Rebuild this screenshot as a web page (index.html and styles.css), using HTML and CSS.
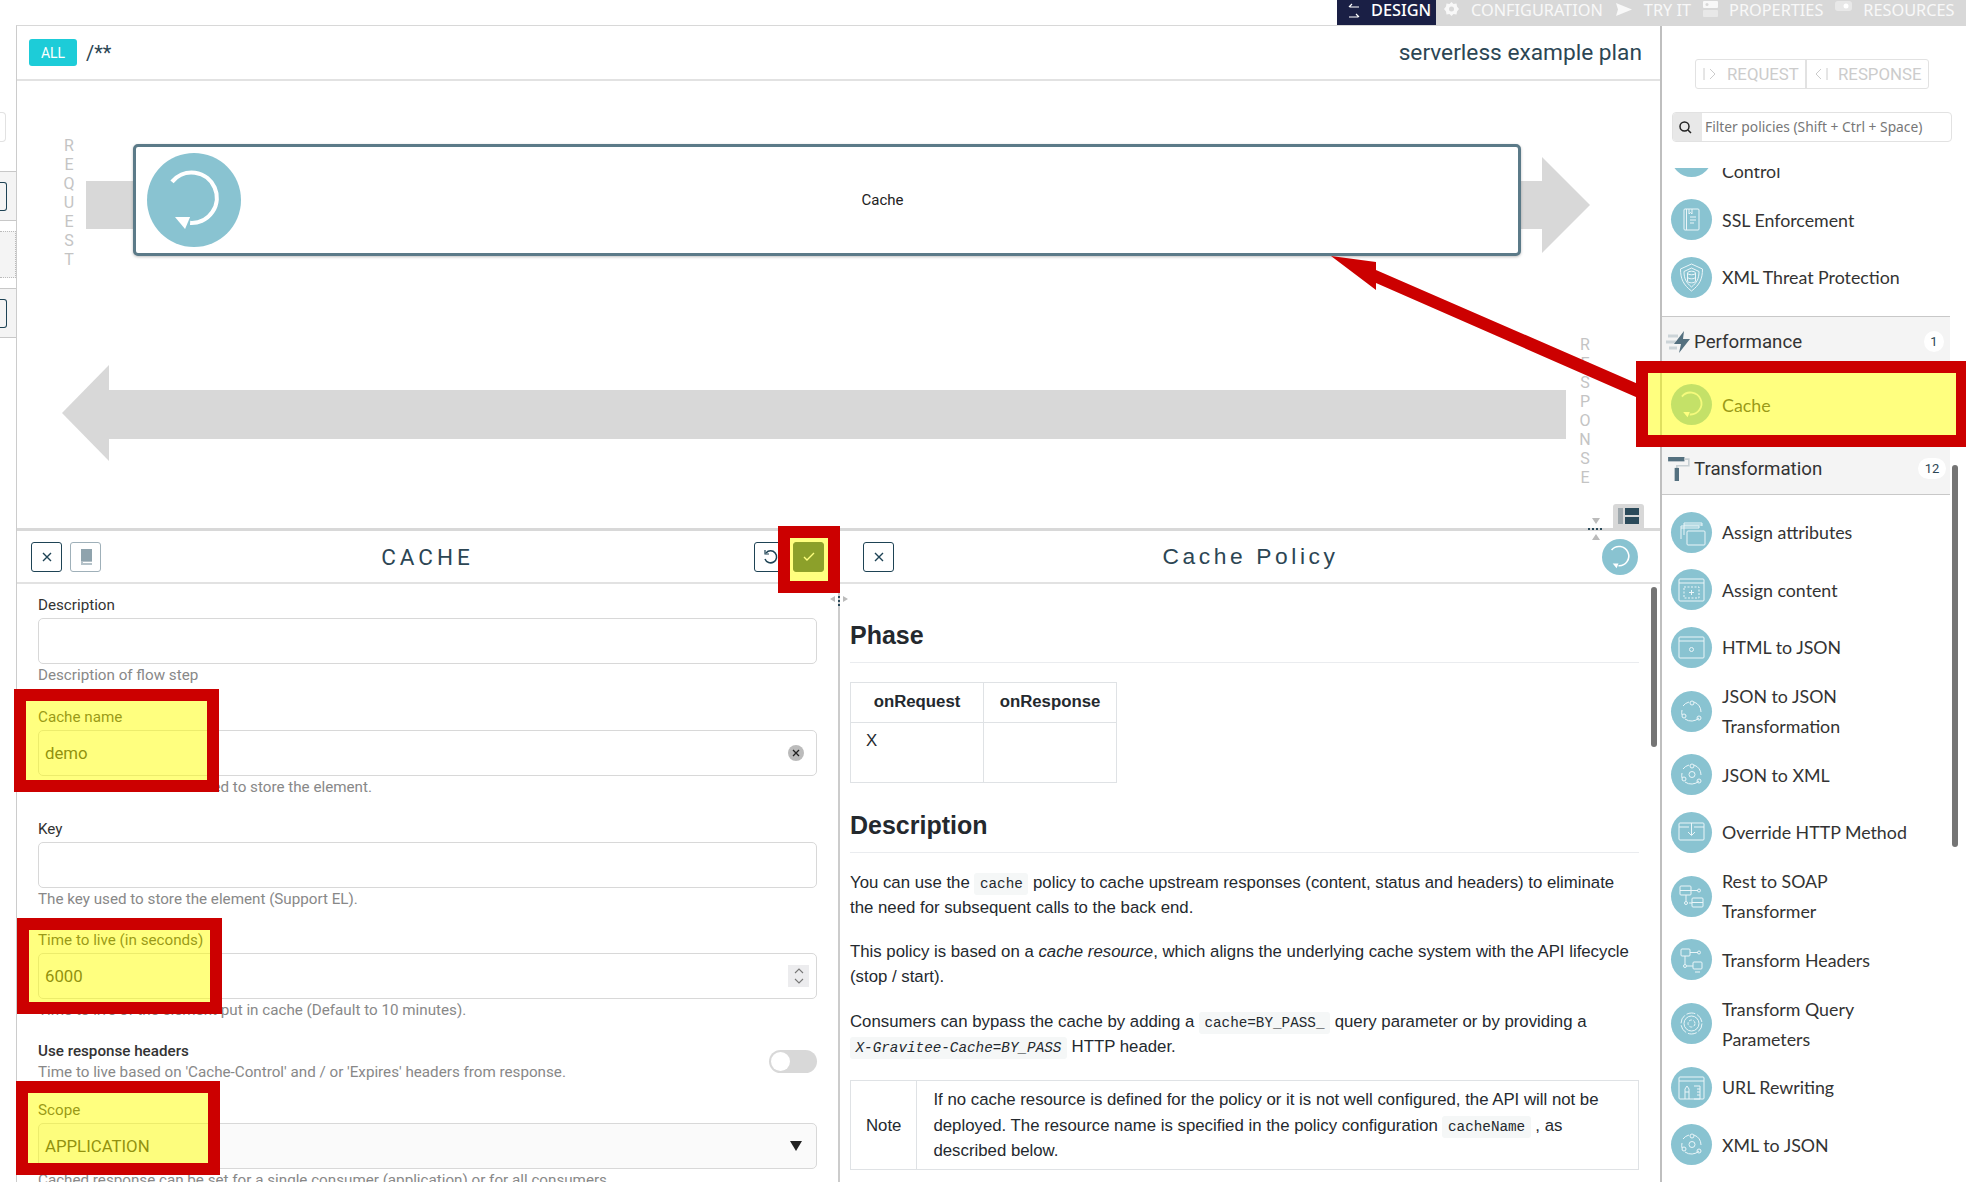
FILE: index.html
```html
<!DOCTYPE html>
<html lang="en">
<head>
  <meta charset="UTF-8">
  <title>Design - serverless example plan</title>
  <link rel="stylesheet" href="styles.css">
</head>
<body>
  <svg class="defs" width="0" height="0">
    <symbol id="i-cache" viewBox="0 0 41 41"><path d="M10.9 12.6A11 11 0 1 1 18.8 30.5" fill="none" stroke-width="1.8"/><path d="M12.2 27.9L16.6 33.2 18.8 27.9Z" fill="#fff" stroke="none"/></symbol>
    <symbol id="i-ssl" viewBox="0 0 41 41"><rect x="13" y="10" width="15" height="21" rx="1"/><path d="M15.5 10v21M18 10v5l1.5-1.5L21 15v-5M19 18h6M19 21h6M19 24h4"/></symbol>
    <symbol id="i-shield" viewBox="0 0 41 41"><path d="M20.5 7l11 5c0 10-3 16-11 22-8-6-11-12-11-22z"/><path d="M20.5 11l7.500 3.500c0 7-2 11-7.500 15.500-5.500-4.500-7.500-8.500-7.500-15.500z"/><ellipse cx="20.500" cy="16" rx="4" ry="1.800"/><path d="M16.500 16v8c0 2.400 8 2.400 8 0v-8M16.500 20c0 2.400 8 2.400 8 0"/></symbol>
    <symbol id="i-attr" viewBox="0 0 41 41"><path d="M13 23V11h18v3M10 27V14h18v2"/><rect x="16" y="19" width="18" height="14" rx="1"/><path d="M10 16h18M13 13h18"/></symbol>
    <symbol id="i-content" viewBox="0 0 41 41"><rect x="8" y="10" width="25" height="22" rx="1"/><path d="M8 14h25"/><rect x="13" y="18" width="15" height="11" stroke-dasharray="2 1.500"/><path d="M20.500 21v5M18 23.500h5"/></symbol>
    <symbol id="i-html" viewBox="0 0 41 41"><rect x="8" y="10" width="25" height="21" rx="1"/><path d="M8 14h25"/><circle cx="20.500" cy="22.500" r="2"/></symbol>
    <symbol id="i-ring" viewBox="0 0 41 41"><path d="M12 15a11 11 0 0 1 6-4M23 11a11 11 0 0 1 7 10M28 27a11 11 0 0 1-14 1M11 24a11 11 0 0 1 0-5"/><circle cx="21" cy="12" r="2"/><circle cx="13" cy="25" r="2"/><circle cx="28" cy="27" r="2"/></symbol>
    <symbol id="i-ring2" viewBox="0 0 41 41"><path d="M12 15a11 11 0 0 1 6-4M23 11a11 11 0 0 1 7 10M28 27a11 11 0 0 1-14 1M11 24a11 11 0 0 1 0-5"/><circle cx="21" cy="12" r="2"/><circle cx="13" cy="25" r="2"/><circle cx="28" cy="27" r="2"/><circle cx="21" cy="20.500" r="3"/></symbol>
    <symbol id="i-override" viewBox="0 0 41 41"><rect x="8" y="11" width="25" height="17" rx="1"/><path d="M8 15h10M23 15h10M20.500 11v12M17 20l3.500 3.500L24 20"/></symbol>
    <symbol id="i-soap" viewBox="0 0 41 41"><rect x="9" y="10" width="11" height="9" rx="1"/><rect x="21" y="22" width="11" height="9" rx="1"/><path d="M9 14.500h11M21 26.500h11M20 14.500h7M15 19v6M18 27h3"/><circle cx="28" cy="14.500" r="1.500"/><circle cx="15" cy="27" r="1.500"/></symbol>
    <symbol id="i-headers" viewBox="0 0 41 41"><rect x="10" y="10" width="9" height="7" rx="1"/><rect x="22" y="23" width="9" height="7" rx="1"/><path d="M19 13.500h8M14 17v8M16 27h6M24 33h5"/><circle cx="28" cy="13.500" r="1.500"/><circle cx="14" cy="27" r="1.500"/></symbol>
    <symbol id="i-query" viewBox="0 0 41 41"><circle cx="20.500" cy="20.500" r="10.500" stroke-dasharray="9 2"/><circle cx="20.500" cy="20.500" r="7.500"/><circle cx="20.500" cy="20.500" r="3.500" stroke-dasharray="3 1.500"/></symbol>
    <symbol id="i-url" viewBox="0 0 41 41"><rect x="8" y="10" width="25" height="22" rx="1"/><path d="M8 14h25M14 32V22l2-3 2 3v10M14 25h4M23 19h6v13h-6M26 22h3M26 25h3M26 28h3"/></symbol>
  </svg>

  <nav class="topbar">
    <a class="tab tab-active"><svg width="14" height="22" viewBox="0 0 14 22" fill="none" stroke="#fff" stroke-width="1.2"><path d="M12 6H3M5 3L2 6M2 16h9M9 13l3 3"/></svg>DESIGN</a>
    <a class="tab"><svg width="17" height="17" viewBox="0 0 17 17"><path d="M8.500 1l2 2 3-.5.500 3 2 2.500-2 2.500-.500 3-3-.5-2 2-2-2-3 .5-.5-3L1 8l2-2.500.5-3 3 .5z" fill="#f8f8f8"/><circle cx="8.500" cy="8" r="2.500" fill="#d8d8d8"/></svg>CONFIGURATION</a>
    <a class="tab"><svg width="18" height="17" viewBox="0 0 18 17"><path d="M1 2l16 6.500L1 15l2-6.500z" fill="#f8f8f8"/></svg>TRY IT</a>
    <a class="tab"><svg width="15" height="16" viewBox="0 0 15 16"><rect width="15" height="7" rx="1" fill="#f8f8f8"/><rect y="9" width="15" height="7" rx="1" fill="#e8e8e8"/><circle cx="4" cy="3.500" r="1.500" fill="#d8d8d8"/></svg>PROPERTIES</a>
    <a class="tab"><svg width="17" height="10" viewBox="0 0 17 10"><rect width="17" height="10" rx="3" fill="#e8e8e8"/><circle cx="11" cy="5" r="2.500" fill="#fff"/></svg>RESOURCES</a>
  </nav>

  <div class="layout">
    <div class="strip">
      <div class="strip-input"></div>
      <div class="strip-row strip-row-first"><span class="strip-box"></span></div>
      <div class="strip-dotted"></div>
      <div class="strip-row"><span class="strip-box"></span></div>
    </div>

    <main class="main">
      <header class="plan-head">
        <span class="badge">ALL</span>
        <span class="path">/**</span>
        <span class="plan-name">serverless example plan</span>
      </header>

      <section class="flow">
        <div class="flow-request">
          <div class="vertical">R E Q U E S T</div>
          <div class="tail"></div>
          <div class="step">
            <svg class="step-icon" width="94" height="94"><use href="#i-cache"/></svg>
            <span class="step-name">Cache</span>
          </div>
          <svg class="head-right" width="69" height="96" viewBox="0 0 69 96"><path d="M0 24H21V0L69 48 21 96V72H0Z" fill="#d8d8d8"/></svg>
        </div>
        <div class="flow-response">
          <svg class="head-left" width="47" height="96" viewBox="0 0 47 96"><path d="M47 0L0 48 47 96Z" fill="#d8d8d8"/></svg>
          <div class="body"></div>
          <div class="vertical vertical-res">R E S P O N S E</div>
        </div>
        <button class="layout-btn"><svg width="21" height="16" viewBox="0 0 21 16"><rect width="5" height="16" fill="#9fa8ad"/><rect x="7" width="14" height="7" fill="#2b4a5a"/><rect x="7" y="9" width="14" height="7" fill="#2b4a5a"/></svg></button>
        <svg class="drag-h" width="18" height="22" viewBox="0 0 18 22"><path d="M5 0h8l-4 6zM5 22h8l-4-6z" fill="#bbb"/><path d="M1 11h16" stroke="#2b4a5a" stroke-width="2" stroke-dasharray="2 2"/></svg>
      </section>

      <section class="panels">
        <div class="panel panel-form">
          <div class="panel-head">
            <div class="btns">
              <button class="btn"><svg width="12" height="12" viewBox="0 0 12 12" stroke="#1e4355" stroke-width="1.400"><path d="M2 2l8 8M10 2l-8 8"/></svg></button>
              <button class="btn btn-grey"><svg width="14" height="18" viewBox="0 0 14 18"><path d="M2 1h11v12H2z" fill="#8fa3ad"/><path d="M2 13h11v1H4v1h9v2H2z" fill="#b5c2c9"/></svg></button>
            </div>
            <h3 class="panel-title">CACHE</h3>
            <div class="btns btns-right">
              <button class="btn"><svg width="16" height="16" viewBox="0 0 16 16" fill="none" stroke="#1e4355" stroke-width="1.500"><path d="M4 4a6 6 0 1 1-1 6"/><path d="M3 1v4h4" stroke-width="1.200"/></svg></button>
              <button class="btn btn-dark"><svg width="12" height="10" viewBox="0 0 12 10" fill="none" stroke="#fff" stroke-width="1.400"><path d="M1 5l3 3 7-7"/></svg></button>
            </div>
          </div>
          <form class="form">
            <div class="field">
              <label>Description</label>
              <div class="input"></div>
              <div class="hint">Description of flow step</div>
            </div>
            <div class="field">
              <label>Cache name</label>
              <div class="input">demo<span class="clear"><svg width="8" height="8" viewBox="0 0 8 8" stroke="#222" stroke-width="1.300"><path d="M1 1l6 6M7 1L1 7"/></svg></span></div>
              <div class="hint">The name of the cache used to store the element.</div>
            </div>
            <div class="field">
              <label>Key</label>
              <div class="input"></div>
              <div class="hint">The key used to store the element (Support EL).</div>
            </div>
            <div class="field">
              <label>Time to live (in seconds)</label>
              <div class="input">6000<span class="spin"><svg width="10" height="18" viewBox="0 0 10 18" fill="none" stroke="#777" stroke-width="1.100"><path d="M1 6l4-4 4 4M1 12l4 4 4-4"/></svg></span></div>
              <div class="hint">Time to live of the element put in cache (Default to 10 minutes).</div>
            </div>
            <div class="field-toggle">
              <div>
                <div class="toggle-label">Use response headers</div>
                <div class="hint">Time to live based on 'Cache-Control' and / or 'Expires' headers from response.</div>
              </div>
              <span class="toggle"><span class="knob"></span></span>
            </div>
            <div class="field field-scope">
              <label>Scope</label>
              <div class="input input-select">APPLICATION<span class="caret"></span></div>
              <div class="hint">Cached response can be set for a single consumer (application) or for all consumers.</div>
            </div>
          </form>
          <svg class="drag-v" width="18" height="14" viewBox="0 0 18 14"><path d="M0 4l5-3v6zM18 4l-5-3v6z" fill="#bbb"/><path d="M9 1v12" stroke="#2b4a5a" stroke-width="2" stroke-dasharray="2 2"/></svg>
        </div>

        <div class="panel panel-doc">
          <div class="panel-head">
            <div class="btns">
              <button class="btn"><svg width="12" height="12" viewBox="0 0 12 12" stroke="#1e4355" stroke-width="1.400"><path d="M2 2l8 8M10 2l-8 8"/></svg></button>
            </div>
            <h3 class="panel-title panel-title-doc">Cache Policy</h3>
            <div class="btns btns-right">
              <svg class="doc-icon" width="36" height="36"><use href="#i-cache"/></svg>
            </div>
          </div>
          <article class="doc">
            <h2>Phase</h2>
            <table class="phase">
              <tr><th>onRequest</th><th>onResponse</th></tr>
              <tr><td>X</td><td></td></tr>
            </table>
            <h2 class="doc-desc">Description</h2>
            <p>You can use the <code>cache</code> policy to cache upstream responses (content, status and headers) to eliminate the need for subsequent calls to the back end.</p>
            <p>This policy is based on a <em>cache resource</em>, which aligns the underlying cache system with the API lifecycle (stop / start).</p>
            <p>Consumers can bypass the cache by adding a <code>cache=BY_PASS_</code> query parameter or by providing a <em><code>X-Gravitee-Cache=BY_PASS</code></em> HTTP header.</p>
            <table class="note">
              <tr><td class="note-label">Note</td><td class="note-text">If no cache resource is defined for the policy or it is not well configured, the API will not be deployed. The resource name is specified in the policy configuration <code>cacheName</code> , as described below.</td></tr>
            </table>
          </article>
          <div class="doc-scroll"></div>
        </div>
      </section>
    </main>

    <aside class="sidebar">
      <div class="modes">
        <span class="mode mode-req"><svg width="16" height="16" viewBox="0 0 16 16" fill="none" stroke="#ccc"><path d="M2 2v12M8 3l5 5-5 5"/></svg>REQUEST</span>
        <span class="mode mode-res"><svg width="16" height="16" viewBox="0 0 16 16" fill="none" stroke="#ccc"><path d="M14 2v12M8 3L3 8l5 5"/></svg>RESPONSE</span>
      </div>
      <div class="filter">
        <span class="filter-icon"><svg width="14" height="14" viewBox="0 0 14 14" fill="none" stroke="#222" stroke-width="1.500"><circle cx="6.500" cy="6.500" r="4.500"/><path d="M10 10l3 3"/></svg></span>
        <span class="filter-text">Filter policies (Shift + Ctrl + Space)</span>
      </div>
      <div class="policies">
        <div class="policies-inner">
          <div class="policy policy-clip"><svg class="policy-icon" width="41" height="41"></svg><span>Role-based Access<br>Control</span></div>
          <div class="policy"><svg class="policy-icon" width="41" height="41"><use href="#i-ssl"/></svg><span>SSL Enforcement</span></div>
          <div class="policy"><svg class="policy-icon" width="41" height="41"><use href="#i-shield"/></svg><span>XML Threat Protection</span></div>
          <div class="group">
            <svg width="26" height="24" viewBox="0 0 26 24"><path d="M2 6h10M0 12h10M3 18h8" stroke="#ccd4d8" stroke-width="3"/><path d="M18 1L8 14h7l-2 9 11-14h-7z" fill="#54707f"/></svg>
            <span class="group-name">Performance</span><span class="count">1</span>
          </div>
          <div class="policies-group">
            <div class="policy"><svg class="policy-icon" width="41" height="41"><use href="#i-cache"/></svg><span>Cache</span></div>
          </div>
          <div class="group group-tall">
            <svg width="26" height="24" viewBox="0 0 20 22"><path d="M0 0h15v4H0z" fill="#54707f"/><path d="M15 2h4v6H8v3" fill="none" stroke="#c8d0d4" stroke-width="1.500"/><path d="M6 10h4v12H6z" fill="#54707f"/></svg>
            <span class="group-name">Transformation</span><span class="count count-wide">12</span>
          </div>
          <div class="policies-group">
            <div class="policy"><svg class="policy-icon" width="41" height="41"><use href="#i-attr"/></svg><span>Assign attributes</span></div>
            <div class="policy"><svg class="policy-icon" width="41" height="41"><use href="#i-content"/></svg><span>Assign content</span></div>
            <div class="policy"><svg class="policy-icon" width="41" height="41"><use href="#i-html"/></svg><span>HTML to JSON</span></div>
            <div class="policy"><svg class="policy-icon" width="41" height="41"><use href="#i-ring"/></svg><span>JSON to JSON<br>Transformation</span></div>
            <div class="policy"><svg class="policy-icon" width="41" height="41"><use href="#i-ring2"/></svg><span>JSON to XML</span></div>
            <div class="policy"><svg class="policy-icon" width="41" height="41"><use href="#i-override"/></svg><span>Override HTTP Method</span></div>
            <div class="policy"><svg class="policy-icon" width="41" height="41"><use href="#i-soap"/></svg><span>Rest to SOAP<br>Transformer</span></div>
            <div class="policy"><svg class="policy-icon" width="41" height="41"><use href="#i-headers"/></svg><span>Transform Headers</span></div>
            <div class="policy"><svg class="policy-icon" width="41" height="41"><use href="#i-query"/></svg><span>Transform Query<br>Parameters</span></div>
            <div class="policy"><svg class="policy-icon" width="41" height="41"><use href="#i-url"/></svg><span>URL Rewriting</span></div>
            <div class="policy"><svg class="policy-icon" width="41" height="41"><use href="#i-ring2"/></svg><span>XML to JSON</span></div>
          </div>
        </div>
      </div>
      <div class="side-scroll"></div>
    </aside>
  </div>

  <!-- annotations drawn over the screenshot -->
  <svg class="red-arrow" width="330" height="170" viewBox="1325 250 330 170"><path d="M1331 256L1376 262V270L1645 387V401L1376 283V290Z" fill="#cc0000"/></svg>
  <div class="mark mark-check"></div>
  <div class="mark mark-name"></div>
  <div class="mark mark-ttl"></div>
  <div class="mark mark-scope"></div>
  <div class="mark mark-policy"></div>
</body>
</html>
```

FILE: styles.css
```css
* {
  box-sizing: border-box;
}
html, body {
  margin: 0;
  height: 1182px;
  overflow: hidden;
}
body {
  position: relative;
  width: 1966px;
  font-family: "Roboto", "Liberation Sans", sans-serif;
  color: #333;
  background: #fff;
}
.defs {
  position: absolute;
}

/* top tabs */
.topbar {
  display: flex;
  width: 629px;
  height: 26px;
  margin-left: 1337px;
  background: #d8d8d8;
  font-family: "Noto Sans", sans-serif;
  font-size: 16.300px;
  line-height: 20px;
  color: #f8f8f8;
  overflow: hidden;
}
.tab {
  display: flex;
  align-items: flex-start;
  gap: 11px;
  height: 25px;
  padding: 0 5px 0 7px;
}
.tab svg {
  margin-top: 1px;
  flex: none;
}
.tab-active {
  width: 99px;
  padding: 0 0 0 10px;
  gap: 10px;
  background: #1a1f45;
  color: #fff;
  font-weight: 500;
}

.layout {
  display: flex;
  height: 1156px;
}

/* leftover of the collapsed menu */
.strip {
  width: 16px;
  flex: none;
  overflow: hidden;
}
.strip-input {
  width: 6px;
  height: 30px;
  margin: 86px 0 0;
  border: 1px solid #e2e2e2;
  border-left: 0;
  border-radius: 0 4px 4px 0;
}
.strip-row {
  height: 50px;
  padding-top: 10px;
  background: #f4f4f4;
  border-top: 1px solid #c8c8c8;
  border-bottom: 1px solid #c8c8c8;
}
.strip-row-first {
  margin-top: 29px;
}
.strip-box {
  display: block;
  width: 7px;
  height: 29px;
  border: 1px solid #1e4355;
  border-left: 0;
  border-radius: 0 3px 3px 0;
}
.strip-dotted {
  height: 47px;
  margin: 10px 0 10px;
  background: #f4f4f4;
  border-top: 1px dotted #bbb;
  border-bottom: 1px dotted #bbb;
  border-right: 1px dotted #bbb;
}

/* main column */
.main {
  width: 1644px;
  flex: none;
  display: flex;
  flex-direction: column;
  border-left: 1px solid #ccc;
  border-top: 1px solid #d8d8d8;
  margin-top: -1px;
}
.plan-head {
  display: flex;
  align-items: center;
  height: 55px;
  padding: 0 18px 0 12px;
  border-bottom: 2px solid #e2e2e2;
  color: #2c4654;
}
.badge {
  width: 48px;
  height: 27px;
  margin-top: -1px;
  background: #1dccd8;
  border-radius: 3px;
  color: #fff;
  font-size: 14px;
  line-height: 28px;
  text-align: center;
}
.path {
  margin-left: 9px;
  font-size: 20px;
}
.plan-name {
  margin-left: auto;
  font-size: 22.700px;
}

/* flow diagram */
.flow {
  position: relative;
  height: 447px;
}
.flow-request {
  display: flex;
  align-items: flex-start;
  height: 135px;
  padding: 55px 0 0 45px;
  box-sizing: content-box;
}
.vertical {
  width: 14px;
  font-size: 16px;
  line-height: 19px;
  text-align: center;
  color: #c4c4c4;
}
.tail {
  width: 47px;
  height: 48px;
  margin: 45px 0 0 10px;
  background: #d8d8d8;
}
.step {
  display: flex;
  align-items: center;
  width: 1388px;
  height: 112px;
  margin-top: 8px;
  padding-left: 11px;
  border: 3px solid #5b7a88;
  border-radius: 5px;
  box-shadow: 0 1px 3px rgba(0, 0, 0, .25);
  position: relative;
  background: #fff;
}
.step-icon {
  background: #89c3d1;
  border-radius: 50%;
  stroke: #fff;
  fill: none;
}
.step-name {
  flex: 1;
  padding-left: 6px;
  font-size: 15px;
  text-align: center;
  color: #222;
}
.head-right {
  margin-top: 21px;
}
.flow-response {
  display: flex;
  align-items: flex-start;
  margin-top: 64px;
  padding-left: 45px;
}
.head-left {
  margin-top: 30px;
}
.body {
  width: 1457px;
  height: 49px;
  margin-top: 55px;
  background: #d8d8d8;
}
.vertical-res {
  margin-left: 12px;
}
.layout-btn {
  position: absolute;
  right: 16px;
  bottom: 0;
  display: flex;
  align-items: center;
  justify-content: center;
  width: 31px;
  height: 24px;
  padding: 0;
  background: #d8d8d8;
  border: 0;
  border-radius: 3px 3px 0 0;
}
.drag-h {
  position: absolute;
  left: 1570px;
  bottom: -12px;
  z-index: 2;
}

/* bottom panels */
.panels {
  display: flex;
  flex: 1;
  min-height: 0;
  border-top: 3px solid #d8d8d8;
}
.panel {
  position: relative;
  overflow: hidden;
}
.panel-form {
  width: 823px;
  flex: none;
  overflow: visible;
  border-right: 2px solid #ccc;
}
.panel-doc {
  flex: 1;
}
.panel-head {
  display: grid;
  grid-template-columns: 1fr auto 1fr;
  align-items: center;
  height: 53px;
  padding: 0 14px;
  border-bottom: 2px solid #e2e2e2;
}
.panel-doc .panel-head {
  padding: 0 22px 0 23px;
}
.panel-title {
  margin: 0;
  font-size: 22.500px;
  font-weight: 400;
  letter-spacing: 4px;
  color: #2c4654;
}
.panel-title-doc {
  font-family: "Liberation Sans", sans-serif;
  font-size: 22.800px;
  letter-spacing: 3.600px;
}
.btns {
  display: flex;
  gap: 8px;
}
.btns-right {
  justify-content: flex-end;
}
.btn {
  display: flex;
  align-items: center;
  justify-content: center;
  width: 31px;
  height: 30px;
  padding: 0;
  background: #fff;
  border: 1px solid #1e4355;
  border-radius: 3px;
}
.btn-grey {
  border-color: #9fb0b9;
}
.btn-dark {
  background: #194154;
}
.doc-icon {
  background: #89c3d1;
  border-radius: 50%;
  stroke: #fff;
  fill: none;
}

/* form */
.form {
  padding: 11px 21px 0 21px;
  font-size: 15.200px;
}
.field {
  margin-bottom: 21.800px;
}
.field label, .toggle-label {
  display: block;
  line-height: 20px;
  color: #333;
}
.field label {
  margin-bottom: 3px;
}
.input {
  position: relative;
  display: flex;
  align-items: center;
  height: 46px;
  padding: 0 6px;
  border: 1px solid #d8d8d8;
  border-radius: 5px;
  font-size: 16.800px;
  color: #222;
}
.hint {
  margin-top: 1px;
  line-height: 20px;
  color: #888;
  white-space: nowrap;
}
.clear {
  position: absolute;
  right: 12px;
  display: flex;
  align-items: center;
  justify-content: center;
  width: 16px;
  height: 16px;
  background: #bbb;
  border-radius: 50%;
}
.spin {
  position: absolute;
  right: 7px;
  display: flex;
  align-items: center;
  justify-content: center;
  width: 21px;
  height: 22px;
  background: #ececee;
}
.input-select {
  background: #fafafa;
}
.caret {
  position: absolute;
  right: 14px;
  border-left: 6px solid transparent;
  border-right: 6px solid transparent;
  border-top: 10px solid #222;
}
.field-toggle {
  display: flex;
  justify-content: space-between;
  margin: -1.500px 0 18px;
  height: 41px;
}
.toggle-label {
  font-weight: 500;
}
.toggle {
  display: block;
  width: 48px;
  height: 23px;
  margin-top: 9px;
  padding: 2px;
  background: #d8d8d8;
  border-radius: 12px;
}
.knob {
  display: block;
  width: 19px;
  height: 19px;
  background: #fff;
  border-radius: 50%;
}
.drag-v {
  position: absolute;
  right: -10px;
  top: 64px;
  z-index: 2;
}

/* documentation */
.doc {
  padding: 36px 21px 0 10px;
  font-family: "Liberation Sans", sans-serif;
  font-size: 16.800px;
  line-height: 25.200px;
  color: #24292e;
}
.doc h2 {
  margin: 0 0 19px;
  padding-bottom: 12px;
  border-bottom: 1px solid #eaecef;
  font-size: 25px;
  line-height: 30px;
  height: 43px;
}
.doc .doc-desc {
  margin-bottom: 16.500px;
}
.doc p {
  margin: 0 0 19.300px;
}
.doc table {
  border-collapse: collapse;
}
.doc td, .doc th {
  border: 1px solid #dfe2e5;
}
.phase {
  margin-bottom: 27px;
}
.phase th {
  width: 133px;
  height: 40px;
  padding: 0 0 2px;
}
.phase td {
  height: 60px;
  padding: 5px 15px;
  vertical-align: top;
}
.note {
  width: 100%;
  margin-top: 21px;
}
.note-label {
  width: 64px;
  padding: 0 15px;
}
.note-text {
  padding: 6px 16px;
}
.doc code {
  padding: 3px 5.500px;
  background: #f5f7f7;
  border-radius: 3px;
  font-family: "Liberation Mono", monospace;
  font-size: 14.300px;
  line-height: 1;
  white-space: nowrap;
}
.doc-scroll {
  position: absolute;
  left: 811px;
  top: 56px;
  width: 6px;
  height: 160px;
  background: #757575;
  border-radius: 3px;
}

/* policies sidebar */
.sidebar {
  position: relative;
  flex: 1;
  border-left: 2px solid #bfbfbf;
  overflow: hidden;
}
.modes {
  display: flex;
  width: 234px;
  height: 30px;
  margin: 33px 0 0 33px;
  border: 1px solid #e2e2e2;
  border-radius: 3px;
  font-size: 16.800px;
  line-height: 28px;
  color: #ccc;
}
.mode {
  display: flex;
  align-items: center;
  gap: 9px;
  padding-left: 6px;
}
.mode-req {
  width: 111px;
  border-right: 2px solid #e2e2e2;
}
.filter {
  display: flex;
  width: 280px;
  height: 30px;
  margin: 23px 0 0 10px;
  border: 1px solid #e2e2e2;
  border-radius: 4px;
  overflow: hidden;
}
.filter-icon {
  display: flex;
  align-items: center;
  justify-content: flex-start;
  width: 29px;
  padding-left: 5px;
  background: #e8e8e8;
}
.filter-text {
  padding-left: 3px;
  font-family: "Noto Sans", sans-serif;
  font-size: 13.800px;
  line-height: 28px;
  color: #777;
}
.policies {
  width: 288px;
  height: 1014px;
  margin-top: 26px;
  overflow: hidden;
}
.policies-inner {
  margin-top: -47px;
}
.policy {
  display: flex;
  align-items: center;
  gap: 10px;
  min-height: 57.500px;
  padding: 5px 0 5px 9px;
  font-family: "Lato", sans-serif;
  font-size: 17.800px;
  line-height: 30px;
  color: #333;
}
.policy-icon {
  flex: none;
  background: #89c3d1;
  border-radius: 50%;
  fill: none;
  stroke: #eaf5f8;
  stroke-width: 1;
}
.policies-group {
  padding: 9px 0;
}
.group {
  display: flex;
  align-items: center;
  height: 51px;
  margin-top: 10px;
  padding: 0 4px 0 4px;
  background: #f4f4f4;
  border-top: 1px solid #c8c8c8;
  border-bottom: 1px solid #c8c8c8;
  font-size: 18.700px;
  color: #333;
}
.policies-group + .group {
  margin-top: 0;
}
.group-tall {
  height: 52px;
}
.group-name {
  margin-left: 2px;
}
.count {
  width: 20px;
  height: 21px;
  margin-left: auto;
  margin-right: 2px;
  background: #fff;
  border-radius: 50%;
  font-size: 13px;
  line-height: 21px;
  text-align: center;
  color: #2c4654;
}
.count-wide {
  width: 28px;
  margin-right: 0;
  border-radius: 11px;
}
.side-scroll {
  position: absolute;
  left: 290px;
  top: 439px;
  width: 6px;
  height: 382px;
  background: #757575;
  border-radius: 3px;
}

/* red annotation boxes over the page */
.red-arrow {
  position: absolute;
  left: 1325px;
  top: 250px;
}
.mark {
  position: absolute;
  background: rgba(255, 255, 0, .5);
  border: 12px solid #cc0000;
}
.mark-check {
  left: 778px;
  top: 526px;
  width: 62px;
  height: 67px;
}
.mark-name {
  left: 14px;
  top: 689px;
  width: 205px;
  height: 103px;
}
.mark-ttl {
  left: 17px;
  top: 918px;
  width: 205px;
  height: 96px;
}
.mark-scope {
  left: 16px;
  top: 1081px;
  width: 204px;
  height: 94px;
}
.mark-policy {
  left: 1636px;
  top: 361px;
  width: 330px;
  height: 86px;
  border-right-width: 10px;
}
```
